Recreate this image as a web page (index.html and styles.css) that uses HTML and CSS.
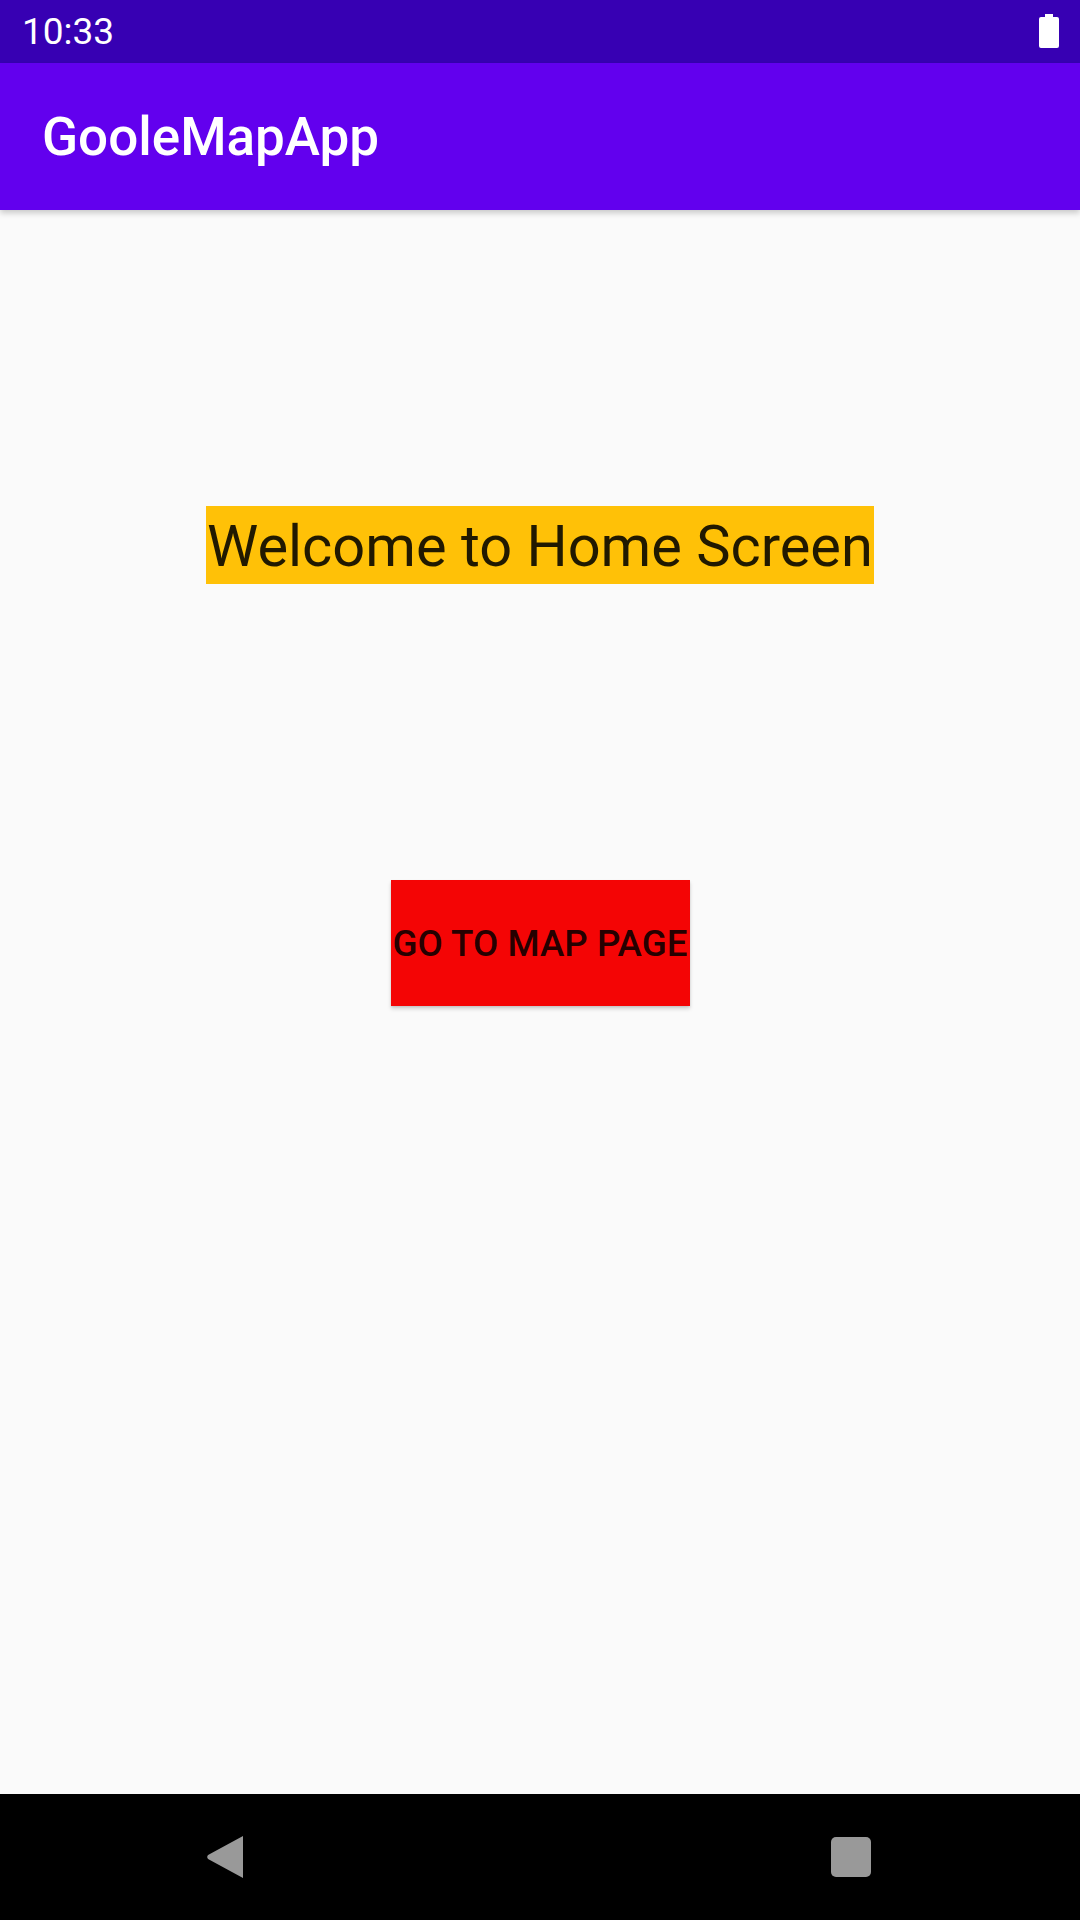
FILE: index.html
```html
<!DOCTYPE html>
<html>
<head>
<meta charset="utf-8">
<link rel="stylesheet" href="styles.css">
</head>
<body>
<div class="screen">
  <div class="status-bar">
    <span class="time">10:33</span>
    <svg class="battery" width="20" height="34" viewBox="0 0 20 34">
      <path d="M6 0h8v3h4a2 2 0 0 1 2 2v27a2 2 0 0 1-2 2H2a2 2 0 0 1-2-2V5a2 2 0 0 1 2-2h4z" fill="#fff"/>
    </svg>
  </div>
  <div class="app-bar">
    <span class="title">GooleMapApp</span>
  </div>
  <div class="content">
    <div class="welcome">Welcome to Home Screen</div>
    <button class="map-btn">GO TO MAP PAGE</button>
  </div>
  <div class="nav-bar">
    <svg class="back" width="36" height="42" viewBox="0 0 36 42">
      <path d="M36 0V42L1.5 23.2a2.5 2.5 0 0 1 0-4.4Z" fill="#999"/>
    </svg>
    <div class="recents"></div>
  </div>
</div>
</body>
</html>
```

FILE: styles.css
```css
html, body {
  margin: 0;
  padding: 0;
}
body {
  font-family: Roboto, "Noto Sans", sans-serif;
  background: #fafafa;
}
.screen {
  width: 1080px;
  height: 1920px;
  display: flex;
  flex-direction: column;
  overflow: hidden;
}
.status-bar {
  height: 63px;
  background: #3700b3;
  display: flex;
  align-items: center;
  justify-content: space-between;
  padding: 0 21px 0 22px;
  box-sizing: border-box;
  color: #fff;
}
.time {
  font-size: 37px;
  line-height: 63px;
}
.battery {
  display: block;
  margin-top: -2px;
}
.app-bar {
  height: 147px;
  background: #6200ee;
  display: flex;
  align-items: center;
  padding-left: 42px;
  box-sizing: border-box;
  box-shadow: 0 3px 6px rgba(0,0,0,0.2);
  position: relative;
  z-index: 1;
}
.title {
  color: #fff;
  font-size: 53px;
  font-weight: 500;
}
.content {
  flex: 1;
  display: flex;
  flex-direction: column;
  align-items: center;
  padding-top: 296px;
  box-sizing: border-box;
}
.welcome {
  background: #ffc107;
  color: rgba(0,0,0,0.87);
  font-size: 57.75px;
  line-height: 75px;
  height: 75px;
  padding: 3px 1px 0;
  white-space: nowrap;
}
.map-btn {
  margin-top: 296px;
  width: 299px;
  height: 126px;
  border: none;
  background: #f40505;
  color: rgba(0,0,0,0.87);
  font-family: Roboto, sans-serif;
  font-size: 36.75px;
  font-weight: 500;
  letter-spacing: 0;
  padding: 0;
  white-space: nowrap;
  box-shadow: 0 3px 4px rgba(0,0,0,0.15), 0 1px 2px rgba(0,0,0,0.1);
}
.nav-bar {
  height: 126px;
  background: #000;
  display: flex;
  align-items: center;
  position: relative;
}
.back {
  display: block;
  margin-left: 207px;
}
.recents {
  width: 40px;
  height: 40px;
  background: #999;
  border-radius: 5px;
  margin-left: 588px;
}
```
